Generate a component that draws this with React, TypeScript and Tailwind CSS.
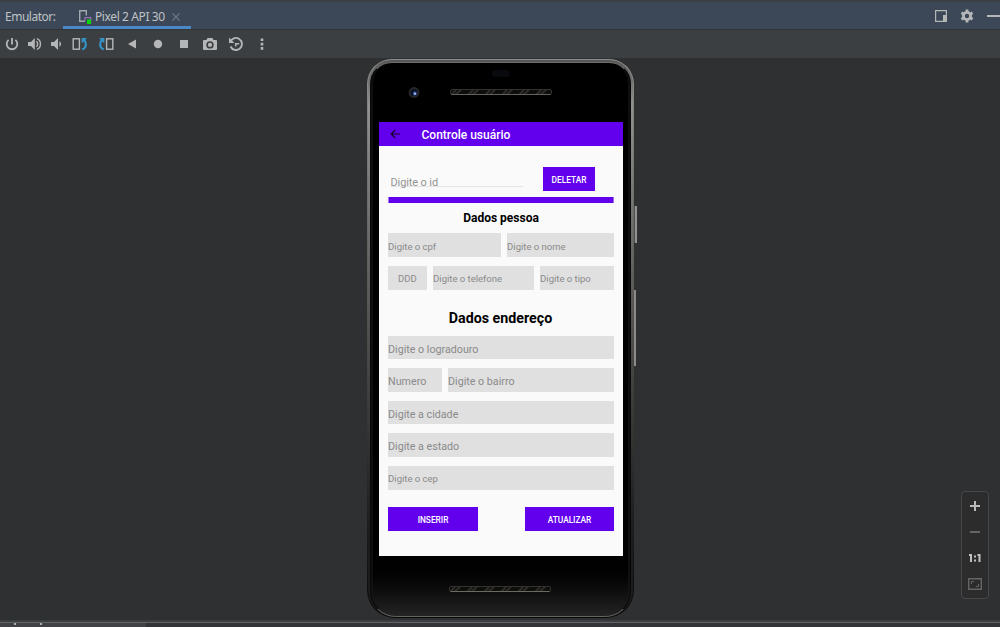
import React from "react";

const G = "#b4b6b8";

function Svg({ children, w = 16, className = "" }: { children: React.ReactNode; w?: number; className?: string }) {
  return (
    <svg width={w} height="16" viewBox={`0 0 ${w} 16`} fill="none" className={`shrink-0 ${className}`}>
      {children}
    </svg>
  );
}

function Toolbar() {
  return (
    <div className="flex h-[28px] shrink-0 items-center bg-[#3c3f41] pl-1">
      <Svg>
        <path d="M8 2v6.5M4.6 3.9a5.3 5.3 0 1 0 6.8 0" stroke={G} strokeWidth="1.8" />
      </Svg>
      <Svg className="ml-[7px]">
        <path d="M1 6h3l3.8-4v12L4 10H1z" fill={G} />
        <path d="M9.4 5.3c1.7 1.2 1.7 4.2 0 5.4M10 2.6c4.6 1.8 4.6 9 0 10.8" stroke={G} strokeWidth="1.4" />
      </Svg>
      <Svg className="ml-[6px]">
        <path d="M2 6h3l4-4v12l-4-4H2z" fill={G} />
        <path d="M10.4 5.2c2.2 1.2 2.2 4.400 0 5.600z" fill={G} />
      </Svg>
      <Svg className="ml-[7px]">
        <rect x="1.2" y="2.8" width="6.2" height="10.4" stroke={G} strokeWidth="1.4" />
        <path d="M10.200 13.600c4.400-2 4.600-6 2-9.600" stroke="#3592c4" strokeWidth="2.200" />
        <path d="M9.600 2h5.400L9.600 7.400z" fill="#3592c4" />
      </Svg>
      <Svg className="ml-[10px]">
        <rect x="8.600" y="2.8" width="6.2" height="10.4" stroke={G} strokeWidth="1.4" />
        <path d="M5.800 13.600c-4.400-2-4.600-6-2-9.600" stroke="#3592c4" strokeWidth="2.200" />
        <path d="M6.400 2H1l5.400 5.400z" fill="#3592c4" />
      </Svg>
      <Svg className="ml-[10px]">
        <path d="M4 8l8-4.500v9z" fill={G} />
      </Svg>
      <Svg className="ml-[10px]">
        <circle cx="8" cy="8" r="4.200" fill={G} />
      </Svg>
      <Svg className="ml-[10px]">
        <path d="M4 4h8v8H4z" fill={G} />
      </Svg>
      <Svg className="ml-[10px]">
        <path fillRule="evenodd" d="M5.500 2h5l1 2H14q1 0 1 1v8q0 1-1 1H2q-1 0-1-1V5q0-1 1-1h2.500zM8 5.200a3.700 3.700 0 1 0 0 7.400a3.700 3.700 0 0 0 0-7.400z" fill={G} />
        <circle cx="8" cy="8.900" r="2.100" fill={G} />
      </Svg>
      <Svg className="ml-[10px]">
        <path d="M2.200 6.200a6 6 0 1 1 .3 4.300" stroke={G} strokeWidth="1.800" />
        <path d="M1 1.500V7h5.500z" fill={G} />
        <path d="M7.700 10.500V7.800h3.500" stroke={G} strokeWidth="1.500" />
      </Svg>
      <Svg className="ml-[10px]">
        <path d="M6.700 2.500h2.600v2.600H6.700zM6.700 6.800h2.600v2.600H6.700zM6.700 11.100h2.600v2.600H6.700z" fill={G} />
      </Svg>
    </div>
  );
}

function Header() {
  return (
    <div className="flex h-[30px] shrink-0 border-t-2 border-b border-t-[#3c3f41] border-b-[#323436] bg-[#3c4857] font-['Noto_Sans','Open_Sans',sans-serif] text-[12px] leading-none text-[#bfc2c5]">
      <div className="flex w-[63px] items-center pl-[5px] pt-[3px]">
        <span className="whitespace-nowrap tracking-[-0.5px]">Emulator:</span>
      </div>
      <div className="flex w-[128px] items-center border-b-[3px] border-[#4a88c7] pl-[15px] pt-[5px]">
        <Svg>
          <path d="M7 12.300H1.700V1.700h6.600V6.500" stroke="#a3a9b0" strokeWidth="1.400" />
          <path d="M7 11.500V8.600h5.700v4H11" stroke="#9873b5" strokeWidth="1.200" />
          <path d="M9 10.500h4V15H9z" fill="#08d808" />
        </Svg>
        <span className="ml-[1px] w-[71px] whitespace-nowrap tracking-[-0.39px]">Pixel 2 API 30</span>
        <svg width="8" height="8" viewBox="0 0 8 8" className="ml-[6px]">
          <path d="M.5.5l7 7M7.500.5l-7 7" stroke="#6c7784" strokeWidth="1.100" />
        </svg>
      </div>
      <div className="ml-auto flex items-center pt-[1px]">
        <svg width="12" height="12" viewBox="0 0 12 12">
          <path d="M.6.600h10.800v10.800H.6z" fill="none" stroke={G} strokeWidth="1.200" />
          <path d="M8 5h4v7H8z" fill={G} />
        </svg>
        <svg width="14" height="14" viewBox="0 0 14 14" className="ml-[13px]">
          <circle cx="7" cy="7" r="3.600" fill="none" stroke={G} strokeWidth="2.800" />
          <path d="M7 .5v3M7 10.500v3M1.400 3.750l2.600 1.500M10 8.750l2.600 1.500M1.400 10.250l2.600-1.500M10 5.250l2.600-1.500" stroke={G} strokeWidth="2.800" />
        </svg>
        <div className="ml-[13px] h-[2px] w-[13px] bg-[#b4b6b8]" />
      </div>
    </div>
  );
}

function Field({ text, className = "" }: { text: string; className?: string }) {
  return (
    <div className={`flex items-center whitespace-nowrap bg-[#e0e0e0] pl-[0.6px] leading-none text-[#8a8a8a] ${className}`}>
      <span>{text}</span>
    </div>
  );
}

function Btn({ text, className = "" }: { text: string; className?: string }) {
  return (
    <div className={`flex h-[24px] items-center justify-center bg-[#6200ee] pt-[2px] pl-px text-[8.300px] leading-none font-medium text-white ${className}`}>
      {text}
    </div>
  );
}

function Screen() {
  return (
    <div className="flex h-[434px] w-[244px] shrink-0 flex-col bg-[#fafafa] font-['Roboto',sans-serif]">
      <div className="flex h-[24px] items-center bg-[#6200ee] pl-[11px]">
        <svg width="11" height="10" viewBox="0 0 11 10">
          <path d="M10 5H1.500M5.300.9L1.200 5l4.100 4.100" fill="none" stroke="#120022" strokeWidth="1.200" />
        </svg>
        <span className="ml-[21px] pt-px text-[12px] leading-none font-medium text-white">Controle usuário</span>
      </div>
      <div className="flex flex-col pl-[9px] pt-[21px]">
        <div className="flex h-[24px]">
          <div className="ml-[3px] h-[20px] w-[132px] border-b border-[#e4e4e4] pt-[9px] text-[11px] leading-[14px] text-[#949494]">
            <span className="tracking-[-0.12px]">Digite o id</span>
          </div>
          <Btn text="DELETAR" className="ml-[20px] w-[52px]" />
        </div>
        <div className="mt-[6px] h-[6px] w-[226px] border-x border-[#a46ff3] bg-[#6200ee] bg-clip-padding" />
        <div className="mt-[8px] w-[226px] pl-px text-center text-[12px] leading-[14px] font-bold text-black">Dados pessoa</div>
        <div className="mt-[8px] flex h-[24px] w-[226px] gap-[6px] text-[9.500px]">
          <Field text="Digite o cpf" className="w-[113px] pt-[3px]" />
          <Field text="Digite o nome" className="w-[107px] pt-[3px]" />
        </div>
        <div className="mt-[9px] flex h-[24px] w-[226px] gap-[6px] text-[9.500px]">
          <Field text="DDD" className="w-[39px] justify-center pt-[2px]" />
          <Field text="Digite o telefone" className="w-[101px] pt-[2px]" />
          <Field text="Digite o tipo" className="w-[74px] pt-[2px]" />
        </div>
        <div className="mt-[19px] h-[18px] w-[226px] text-center text-[14.250px] leading-[18px] font-bold text-black">Dados endereço</div>
        <Field text="Digite o logradouro" className="mt-[9px] h-[23px] w-[226px] pt-[5px] text-[10.700px]" />
        <div className="mt-[9px] flex h-[24px] w-[226px] gap-[6px] text-[10.700px]">
          <Field text="Numero" className="w-[54px] pt-[5px]" />
          <Field text="Digite o bairro" className="w-[166px] pt-[5px]" />
        </div>
        <Field text="Digite a cidade" className="mt-[9px] h-[23px] w-[226px] pt-[5px] text-[10.700px]" />
        <Field text="Digite a estado" className="mt-[9px] h-[24px] w-[226px] pt-[5px] text-[10.700px]" />
        <Field text="Digite o cep" className="mt-[9px] h-[24px] w-[226px] pt-[2px] text-[9.500px]" />
        <div className="mt-[17px] flex w-[226px] justify-between">
          <Btn text="INSERIR" className="w-[90px]" />
          <Btn text="ATUALIZAR" className="w-[89px]" />
        </div>
      </div>
    </div>
  );
}

function Speaker({ id, bright }: { id: string; bright: string }) {
  return (
    <svg width="102" height="6" viewBox="0 0 102 6" className="shrink-0">
      <defs>
        <pattern id={id} width="17" height="6" patternUnits="userSpaceOnUse">
          <path d="M0 0h17v6H0z" fill="#0d0d0c" />
          <path d="M1 6l5-5M5 6l6-5" stroke="#2e2c29" strokeWidth="2" />
        </pattern>
      </defs>
      <rect x=".5" y=".5" width="101" height="5" rx="1.500" fill={`url(#${id})`} stroke="#33322f" />
      <path d="M1.500 5.500h99" stroke={bright} />
    </svg>
  );
}

function Phone() {
  return (
    <div className="relative h-[559px] w-[267px] shrink-0">
      <div className="absolute left-[266px] top-[147px] h-[37px] w-[4px] border-r-2 border-[#929290] bg-[#4e4e4e]" />
      <div className="absolute left-[266px] top-[231px] h-[76px] w-[3px] border-r-2 border-[#8a8a88] bg-[#4a4a4a]" />
      <div className="relative h-full w-full rounded-t-[25px] rounded-b-[28px] bg-linear-to-b from-[#8e8e8c] via-[#55544f] via-45% to-[#080808] p-px">
        <div className="h-full w-full rounded-t-[24px] rounded-b-[27px] bg-linear-to-b from-[#555] from-0% via-[#929290] via-8% to-[#1c1c1c] to-85% px-[2px] pt-[2px]">
          <div className="h-full w-full rounded-t-[22px] rounded-b-[26px] border-x border-t border-b border-t-[#6c6c6c] border-x-[#080808] border-b-[#64645e] bg-linear-to-b from-black from-88% to-[#242424]">
            <div className="h-full w-full rounded-t-[21px] rounded-b-[25px] border-x-2 border-[#181818]/60">
              <div className="flex h-full flex-col items-center">
                <div className="mt-[7px] h-[7px] w-[18px] rounded-full bg-[#090a0e]" />
                <div className="mt-[9px] flex h-[12px] w-full items-center pl-[35px]">
                  <svg width="12" height="12" viewBox="0 0 12 12">
                    <circle cx="6" cy="6.500" r="5.400" fill="#27272a" />
                    <circle cx="6" cy="6.500" r="3.500" fill="#0b1226" />
                    <circle cx="6.800" cy="7.500" r="1.900" fill="#3c5ea8" />
                    <circle cx="7" cy="7.800" r="1" fill="#b4c8f2" />
                  </svg>
                  <div className="ml-[30px] flex">
                    <Speaker id="earpiece" bright="#64625c" />
                  </div>
                </div>
                <div className="mt-[24px] flex">
                  <Screen />
                </div>
                <div className="mt-[30px] -ml-[2px] flex">
                  <Speaker id="speaker" bright="#6b6a5e" />
                </div>
              </div>
            </div>
          </div>
        </div>
      </div>
    </div>
  );
}

function ZoomPanel() {
  return (
    <div className="flex h-[108px] w-[28px] flex-col items-center rounded-[4px] border border-[#45474a] bg-[#2c2c2c] pt-[9px]">
      <svg width="10" height="10" viewBox="0 0 10 10">
        <path d="M5 0v10M0 5h10" stroke="#b9b9b9" strokeWidth="2" />
      </svg>
      <div className="mt-[20px] h-[2px] w-[10px] bg-[#656565]" />
      <svg width="12" height="10" viewBox="0 0 12 10" className="mt-[20px]">
        <path d="M0 2h2M2 1v8M8.500 2h2M10.500 1v8" stroke="#c0c0c0" strokeWidth="2" />
        <path d="M5 2.500h2v2H5zM5 6.500h2v2H5z" fill="#c0c0c0" />
      </svg>
      <svg width="14" height="12" viewBox="0 0 14 12" className="mt-[15px]">
        <path d="M.7.700h12.600v10.600H.7z" fill="none" stroke="#656565" strokeWidth="1.400" />
        <path d="M3.500 6V3.500H6M8 8.500h2.500V6" fill="none" stroke="#656565" />
      </svg>
    </div>
  );
}

export default function App() {
  return (
    <div className="flex h-[627px] w-[1000px] flex-col overflow-hidden bg-[#2f3032]">
      <Header />
      <Toolbar />
      <div className="flex h-[562px] shrink-0 pt-px">
        <div className="w-[367px]" />
        <Phone />
        <div className="ml-auto mr-[11px] mt-[432px]">
          <ZoomPanel />
        </div>
      </div>
      <div className="flex h-[7px] shrink-0 flex-col bg-[#3c3f41]">
        <div className="mt-[2px] h-px bg-[#626466]" />
        <div className="flex h-[4px] bg-[#333437]">
          <div className="flex h-full w-[146px] bg-[#414246] pl-[14px]">
            <div className="h-[2px] w-[2px] bg-[#9dafb0]" />
            <div className="ml-[24px] h-[2px] w-[2px] bg-[#9dafb0]" />
          </div>
        </div>
      </div>
    </div>
  );
}
